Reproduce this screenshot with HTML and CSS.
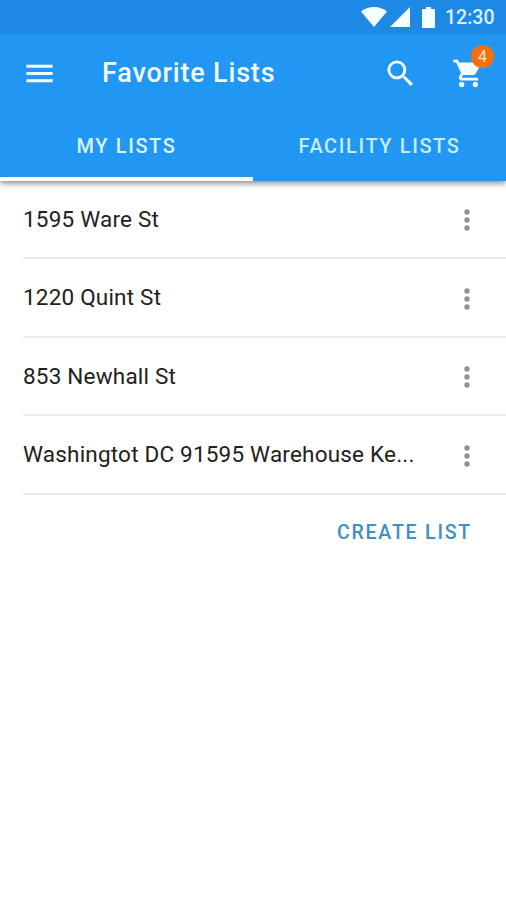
FILE: index.html
```
<!doctype html>
<html lang="en">
<head>
    <meta charset="UTF-8">
    <meta name="viewport" content="width=device-width, initial-scale=1.0">
    <title>Favorite Lists</title>
    <link rel="stylesheet" href="styles.css">
</head>
<body>
    <header class="header">
        <div class="status-bar">
            <svg class="wifi" width="26" height="20" viewBox="0 0 26 20"><path d="M0 4.500C3.500 1.500 8 0 13 0s9.500 1.500 13 4.500L13 20z"/></svg>
            <svg class="signal" width="20" height="20" viewBox="0 0 20 20"><path d="M20 0v20H0z"/></svg>
            <svg class="battery" width="13" height="21" viewBox="0 0 13 21"><path d="M4 0h5v2h3a1 1 0 0 1 1 1v17a1 1 0 0 1-1 1H1a1 1 0 0 1-1-1V3a1 1 0 0 1 1-1h3z"/></svg>
            <span class="time">12:30</span>
        </div>
        <div class="toolbar">
            <button class="icon-button menu" aria-label="Menu">
                <svg width="35" height="35" viewBox="0 0 24 24"><path d="M3 18h18v-2H3v2zm0-5h18v-2H3v2zm0-7v2h18V6H3z"/></svg>
            </button>
            <h1>Favorite Lists</h1>
            <button class="icon-button search" aria-label="Search">
                <svg width="35" height="35" viewBox="0 0 24 24"><path d="M15.500 14h-.79l-.28-.27A6.471 6.471 0 0 0 16 9.500 6.500 6.500 0 1 0 9.500 16c1.610 0 3.090-.59 4.230-1.570l.27.28v.79l5 4.990L20.490 19l-4.990-5zm-6 0C7.010 14 5 11.990 5 9.500S7.010 5 9.500 5 14 7.010 14 9.500 11.990 14 9.500 14z"/></svg>
            </button>
            <button class="icon-button cart" aria-label="Cart">
                <svg width="33" height="33" viewBox="0 0 24 24"><path d="M7 18c-1.100 0-1.990.9-1.990 2S5.900 22 7 22s2-.9 2-2-.9-2-2-2zM1 2v2h2l3.600 7.590-1.350 2.450c-.16.28-.25.61-.25.96 0 1.100.9 2 2 2h12v-2H7.420c-.14 0-.25-.11-.25-.25l.03-.12.9-1.630h7.450c.75 0 1.410-.41 1.750-1.030l3.580-6.490A1 1 0 0 0 20 4H5.210l-.94-2H1zm16 16c-1.100 0-1.990.9-1.990 2s.89 2 1.990 2 2-.9 2-2-.9-2-2-2z"/></svg>
                <span class="badge">4</span>
            </button>
        </div>
        <nav class="tabs">
            <a class="tab active">MY LISTS</a>
            <a class="tab">FACILITY LISTS</a>
        </nav>
    </header>

    <ul class="list">
        <li class="item">
            <span class="name">1595 Ware St</span>
            <svg class="more" width="6" height="22" viewBox="0 0 6 22"><circle cx="3" cy="3" r="2.700"/><circle cx="3" cy="11" r="2.700"/><circle cx="3" cy="19" r="2.700"/></svg>
        </li>
        <li class="item">
            <span class="name">1220 Quint St</span>
            <svg class="more" width="6" height="22" viewBox="0 0 6 22"><circle cx="3" cy="3" r="2.700"/><circle cx="3" cy="11" r="2.700"/><circle cx="3" cy="19" r="2.700"/></svg>
        </li>
        <li class="item">
            <span class="name">853 Newhall St</span>
            <svg class="more" width="6" height="22" viewBox="0 0 6 22"><circle cx="3" cy="3" r="2.700"/><circle cx="3" cy="11" r="2.700"/><circle cx="3" cy="19" r="2.700"/></svg>
        </li>
        <li class="item">
            <span class="name">Washingtot DC 91595 Warehouse Ke...</span>
            <svg class="more" width="6" height="22" viewBox="0 0 6 22"><circle cx="3" cy="3" r="2.700"/><circle cx="3" cy="11" r="2.700"/><circle cx="3" cy="19" r="2.700"/></svg>
        </li>
    </ul>

    <div class="actions">
        <button class="create">CREATE LIST</button>
    </div>
</body>
</html>
```
FILE: styles.css
```
* {
    box-sizing: border-box;
}

body {
    margin: 0;
    font-family: Roboto, sans-serif;
    background-color: #fff;
    color: #212121;
}

button {
    padding: 0;
    border: none;
    background: none;
    font-family: inherit;
    cursor: pointer;
}

svg {
    display: block;
    flex: none;
}

.header {
    height: 181px;
    background-color: #2196f3;
    color: #fff;
    box-shadow: 0 2px 6px rgba(0, 0, 0, 0.5);
}

.header svg {
    fill: #f4ffff;
}

.status-bar {
    display: flex;
    align-items: center;
    justify-content: flex-end;
    height: 34px;
    padding-right: 11px;
    background-color: #1e88e5;
}

.signal {
    margin-left: 3px;
}

.battery {
    margin-left: 12px;
}

.time {
    width: 50px;
    margin-left: 10px;
    padding-top: 1px;
    font-size: 19.5px;
    font-weight: 500;
    line-height: 34px;
    white-space: nowrap;
    color: #d9f1ff;
}

.toolbar {
    display: flex;
    align-items: center;
    height: 79px;
    padding: 0 21px 0 22px;
}

.toolbar h1 {
    flex: 1;
    margin: 0 0 2px 45px;
    font-size: 27px;
    font-weight: 500;
    letter-spacing: 0.8px;
    color: #f0fcff;
}

.cart {
    position: relative;
    margin-left: 34px;
}

.badge {
    position: absolute;
    top: -12px;
    right: -9px;
    width: 23px;
    height: 23px;
    border-radius: 50%;
    background-color: #f4700c;
    color: #ffe3cc;
    font-size: 16px;
    line-height: 23px;
    text-align: center;
}

.tabs {
    display: flex;
    height: 68px;
}

.tab {
    flex: 1;
    padding-top: 21px;
    font-size: 20px;
    font-weight: 500;
    line-height: 25px;
    letter-spacing: 1.6px;
    text-align: center;
    color: #c5edff;
    border-bottom: 4px solid transparent;
}

.tab.active {
    color: #d5f5ff;
    border-bottom-color: #fff;
}

.list {
    margin: -0.6px 0 0;
    padding: 0 0 0 23px;
    list-style: none;
}

.item {
    display: flex;
    align-items: center;
    justify-content: space-between;
    height: 78.6px;
    padding-right: 36px;
    border-bottom: 2px solid #ebebeb;
}

.name {
    font-size: 22.5px;
    letter-spacing: 0.2px;
    white-space: nowrap;
}

.more {
    margin-top: 3px;
    fill: #919191;
}

.actions {
    display: flex;
    justify-content: flex-end;
    padding: 25px 34px 0 0;
}

.create {
    font-size: 19.5px;
    font-weight: 500;
    line-height: 26px;
    letter-spacing: 1.8px;
    color: #3d8fc4;
}
```
